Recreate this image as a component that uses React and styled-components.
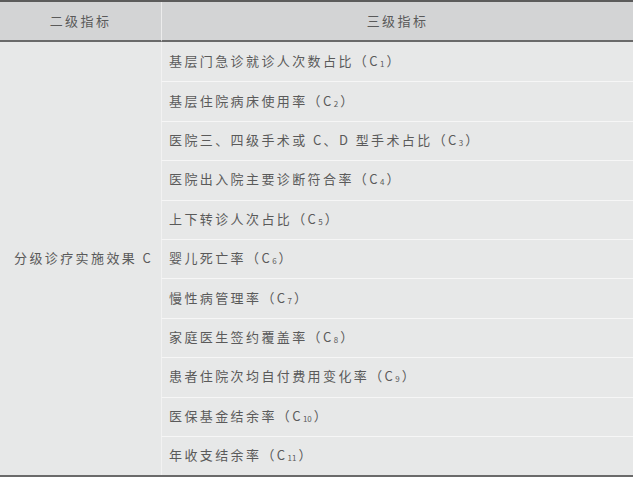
import React from "react";
import styled, { createGlobalStyle } from "styled-components";

const GlobalStyle = createGlobalStyle`
  body {
    margin: 0;
    background: #ffffff;
    font-family: "Noto Sans CJK SC", "Noto Sans", sans-serif;
  }
`;

const Page = styled.div`
  width: 633px;
`;

const Table = styled.div`
  display: grid;
  grid-template-columns: 161px 1fr;
  border-top: 2px solid #5c5c5c;
  border-bottom: 2px solid #6a6a6a;
  color: #5a5a5a;
  font-size: 13px;
  letter-spacing: 2.4px;
`;

const HeadCell = styled.div`
  height: 40px;
  box-sizing: border-box;
  padding-bottom: 1px;
  display: flex;
  align-items: center;
  justify-content: center;
  background: #d3d4d5;
  border-bottom: 2px solid #6a6a6a;
  border-left: ${(p) => (p.$divider ? "1px solid #ececec" : "none")};
`;

const GroupCell = styled.div`
  grid-row: span 11;
  display: flex;
  align-items: center;
  padding-left: 14px;
  padding-bottom: 3px;
  background: #e7e8e8;
`;

const ItemCell = styled.div`
  height: 39.4px;
  box-sizing: border-box;
  display: flex;
  align-items: center;
  padding-left: 7px;
  padding-bottom: 3px;
  background: #e7e8e8;
  border-left: 1px solid #f2f2f2;
  border-top: ${(p) => (p.$first ? "none" : "1px solid #f6f6f6")};
`;

const Sub = styled.span`
  font-size: 8px;
  letter-spacing: 0;
  position: relative;
  top: 3px;
  margin-right: 2px;
`;

const items = [
  ["基层门急诊就诊人次数占比", 1],
  ["基层住院病床使用率", 2],
  ["医院三、四级手术或 C、D 型手术占比", 3],
  ["医院出入院主要诊断符合率", 4],
  ["上下转诊人次占比", 5],
  ["婴儿死亡率", 6],
  ["慢性病管理率", 7],
  ["家庭医生签约覆盖率", 8],
  ["患者住院次均自付费用变化率", 9],
  ["医保基金结余率", 10],
  ["年收支结余率", 11],
];

const App = () => {
  return (
    <Page>
      <GlobalStyle />
      <Table>
        <HeadCell>二级指标</HeadCell>
        <HeadCell $divider>三级指标</HeadCell>
        <GroupCell>分级诊疗实施效果 C</GroupCell>
        {items.map(([label, n], i) => (
          <ItemCell key={n} $first={i === 0}>
            {label}（C<Sub>{n}</Sub>）
          </ItemCell>
        ))}
      </Table>
    </Page>
  );
};

export default App;
